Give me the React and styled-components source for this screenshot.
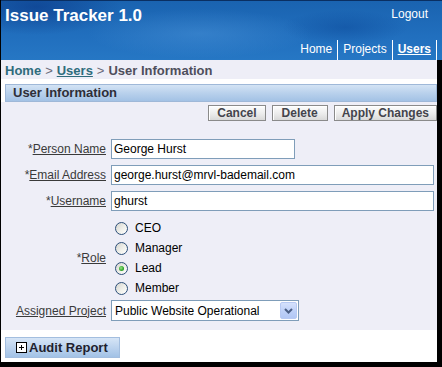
import React from 'react';
import styled, { createGlobalStyle, css } from 'styled-components';

const Global = createGlobalStyle`
  html, body { margin: 0; padding: 0; background: #000; }
  body { font-family: "Liberation Sans", Arial, sans-serif; font-size: 12px; }
  * { box-sizing: border-box; }
`;

const Page = styled.div`
  width: 442px;
  height: 367px;
  background: #000;
  padding-left: 1px;
  overflow: hidden;
`;

const Header = styled.header`
  height: 60px;
  border-top: 1px solid #0a2f62;
  display: flex;
  flex-direction: column;
  justify-content: space-between;
  color: #fff;
  padding-top: 5px;
  background:
    radial-gradient(ellipse 120px 40px at 8% 10%, rgba(8, 50, 130, 0.55), transparent 70%),
    radial-gradient(ellipse 160px 35px at 45% 55%, rgba(90, 160, 225, 0.35), transparent 70%),
    radial-gradient(ellipse 90px 25px at 78% 45%, rgba(10, 70, 150, 0.45), transparent 70%),
    linear-gradient(180deg, #1a63b0 0%, #216fbe 60%, #2677c4 100%);
`;

const TopRow = styled.div`
  display: flex;
  justify-content: space-between;
  align-items: flex-start;
  padding: 0 14px 0 4px;
`;

const Title = styled.h1`
  margin: 0;
  font-size: 17px;
  line-height: 20px;
  font-weight: bold;
  color: #fff;
`;

const Logout = styled.a`
  margin-top: 1px;
  font-size: 12px;
  line-height: 14px;
  color: #fff;
  text-decoration: none;
`;

const Nav = styled.nav`
  display: flex;
  justify-content: flex-end;
  padding-right: 5px;
`;

const NavItem = styled.a`
  height: 20px;
  line-height: 18px;
  padding: 0 5px;
  font-size: 12px;
  color: #fff;
  border-right: 1px solid #fff;
  ${p => p.$active ? css`
    font-weight: bold;
    text-decoration: underline;
  ` : css`
    text-decoration: none;
  `}
`;

const Content = styled.div`
  width: 436px;
  height: 302px;
  background: #fff;
`;

const Breadcrumb = styled.div`
  background: #eeeef7;
  padding: 3px 4px 1px;
  font-size: 13px;
  line-height: 15px;
  font-weight: bold;
  color: #4e4e5c;
`;

const Crumb = styled.a`
  color: #2f6c7c;
  text-decoration: ${p => (p.$underline ? 'underline' : 'none')};
`;

const Sep = styled.span`
  color: #6a6a78;
  font-weight: normal;
  margin: 0 4px;
`;

const Region = styled.section`
  margin-top: 5px;
`;

const RegionHeader = styled.h2`
  margin: 0 0 0 4px;
  height: 18px;
  border: 1px solid #9fb8d8;
  background: linear-gradient(180deg, #d3e3f4 0%, #b9d1ec 50%, #a3c2e5 100%);
  padding-left: 7px;
  font-size: 13px;
  line-height: 16px;
  font-weight: bold;
  color: #2e2e38;
`;

const RegionBody = styled.div`
  background: #eeeef7;
  padding: 3px 0 9px;
`;

const ButtonRow = styled.div`
  display: flex;
  justify-content: flex-end;
  gap: 6px;
`;

const Button = styled.button`
  height: 16px;
  border: 1px solid #8a8a8a;
  box-shadow: inset 1px 1px 0 #fff;
  background: linear-gradient(180deg, #fdfdfd 0%, #ececec 55%, #d9d9d9 100%);
  padding: 0 ${p => p.$pad || 9}px;
  margin: 0;
  font-family: "Liberation Sans", Arial, sans-serif;
  font-size: 12px;
  line-height: 13px;
  font-weight: bold;
  color: #44444c;
`;

const Form = styled.div`
  display: flex;
  flex-direction: column;
  padding-top: 18px;
`;

const Row = styled.div`
  display: flex;
  align-items: center;
  margin-top: ${p => p.$top || 0}px;
`;

const Label = styled.label`
  width: 105px;
  margin-right: 5px;
  text-align: right;
  font-size: 12px;
  color: #3a3a3a;
  white-space: nowrap;
`;

const LabelText = styled.span`
  text-decoration: underline;
`;

const TextBox = styled.div`
  width: ${p => p.$w}px;
  height: 20px;
  border: 1px solid #7f9db9;
  background: #fff;
  padding: 0 2px;
  font-size: 12px;
  line-height: 18px;
  color: #000;
  white-space: nowrap;
  overflow: hidden;
`;

const RadioGroup = styled.div`
  display: flex;
  flex-direction: column;
`;

const RadioLine = styled.div`
  height: 20px;
  display: flex;
  align-items: center;
  gap: 7px;
  padding-left: 4px;
  font-size: 12px;
  color: #000;
`;

const RadioCircle = styled.span`
  position: relative;
  width: 13px;
  height: 13px;
  border-radius: 50%;
  border: 1px solid #2c4e78;
  background: linear-gradient(135deg, #d6d6d0 0%, #efefea 55%, #ffffff 100%);
  ${p => p.$checked && css`
    &::after {
      content: '';
      position: absolute;
      left: 3px;
      top: 3px;
      width: 5px;
      height: 5px;
      border-radius: 50%;
      background: radial-gradient(circle at 40% 40%, #9ae686 0%, #2ea52a 60%, #1f8a1d 100%);
    }
  `}
`;

const Select = styled.div`
  width: 188px;
  height: 21px;
  border: 1px solid #7f9db9;
  background: #fff;
  display: flex;
  align-items: center;
  justify-content: space-between;
  padding: 0 1px 0 3px;
  font-size: 12px;
  color: #000;
`;

const SelectButton = styled.span`
  width: 17px;
  height: 17px;
  border-radius: 2px;
  border: 1px solid #b7c9f3;
  background: linear-gradient(180deg, #d5e1fc 0%, #bccff8 60%, #b2c7f5 100%);
  display: flex;
  align-items: center;
  justify-content: center;
`;

const AuditTab = styled.div`
  margin: 7px 0 0 4px;
  width: 115px;
  height: 21px;
  border: 1px solid #a3bedf;
  background: linear-gradient(180deg, #d6e5f6 0%, #bcd3ee 50%, #a2c2e6 100%);
  display: flex;
  align-items: center;
  gap: 2px;
  padding-left: 10px;
  font-size: 13px;
  font-weight: bold;
  color: #1f1f2e;
`;

const PlusIcon = () => (
  <svg width="11" height="11" viewBox="0 0 11 11" style={{ display: 'block' }}>
    <rect x="0.5" y="0.5" width="10" height="10" fill="#fff" stroke="#000" />
    <path d="M3 5.5 H8 M5.5 3 V8" stroke="#000" strokeWidth="1" />
  </svg>
);

const Chevron = () => (
  <svg width="9" height="6" viewBox="0 0 9 6" style={{ display: 'block' }}>
    <path d="M1 1 L4.5 4.5 L8 1" fill="none" stroke="#4b5f86" strokeWidth="2" />
  </svg>
);

const roles = [
  { name: 'CEO' },
  { name: 'Manager' },
  { name: 'Lead', checked: true },
  { name: 'Member' },
];

function Field({ label, children, top }) {
  return (
    <Row $top={top}>
      <Label>*<LabelText>{label}</LabelText></Label>
      {children}
    </Row>
  );
}

export default function App() {
  return (
    <Page>
      <Global />
      <Header>
        <TopRow>
          <Title>Issue Tracker 1.0</Title>
          <Logout>Logout</Logout>
        </TopRow>
        <Nav>
          <NavItem>Home</NavItem>
          <NavItem>Projects</NavItem>
          <NavItem $active>Users</NavItem>
        </Nav>
      </Header>
      <Content>
        <Breadcrumb>
          <Crumb>Home</Crumb>
          <Sep>&gt;</Sep>
          <Crumb $underline>Users</Crumb>
          <Sep>&gt;</Sep>
          User Information
        </Breadcrumb>
        <Region>
          <RegionHeader>User Information</RegionHeader>
          <RegionBody>
            <ButtonRow>
              <Button $pad={8}>Cancel</Button>
              <Button $pad={9}>Delete</Button>
              <Button $pad={7}>Apply Changes</Button>
            </ButtonRow>
            <Form>
              <Field label="Person Name">
                <TextBox $w={184}>George Hurst</TextBox>
              </Field>
              <Field label="Email Address" top={6}>
                <TextBox $w={323}>george.hurst@mrvl-bademail.com</TextBox>
              </Field>
              <Field label="Username" top={6}>
                <TextBox $w={323}>ghurst</TextBox>
              </Field>
              <Field label="Role" top={7}>
                <RadioGroup>
                  {roles.map(r => (
                    <RadioLine key={r.name}>
                      <RadioCircle $checked={r.checked} />
                      {r.name}
                    </RadioLine>
                  ))}
                </RadioGroup>
              </Field>
              <Row $top={2}>
                <Label><LabelText>Assigned Project</LabelText></Label>
                <Select>
                  Public Website Operational
                  <SelectButton><Chevron /></SelectButton>
                </Select>
              </Row>
            </Form>
          </RegionBody>
        </Region>
        <AuditTab>
          <PlusIcon />
          Audit Report
        </AuditTab>
      </Content>
    </Page>
  );
}
